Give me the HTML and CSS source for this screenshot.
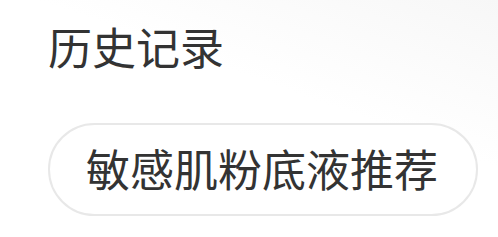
FILE: index.html
```html
<!DOCTYPE html>
<html lang="zh-CN">

<head>
    <meta charset="UTF-8">
    <meta name="viewport" content="width=device-width, initial-scale=1.0">
    <title>历史记录</title>
    <link rel="stylesheet" href="styles.css">
</head>

<body>
    <section class="history">
        <h2 class="history-title">历史记录</h2>
        <div class="history-tags">
            <span class="tag">敏感肌粉底液推荐</span>
        </div>
    </section>
</body>

</html>
```

FILE: styles.css
```css
* {
    margin: 0;
    padding: 0;
    box-sizing: border-box;
}

body {
    font-family: "Noto Sans CJK SC", "Noto Sans", sans-serif;
    background: linear-gradient(200deg, #f7f7f7 0%, #ffffff 40%);
    min-height: 237px;
    color: #333;
}

.history {
    padding: 22px 0 0 48px;
}

.history-title {
    font-size: 44px;
    font-weight: normal;
    line-height: 48px;
}

.history-tags {
    display: flex;
    margin-top: 53px;
}

.tag {
    display: inline-flex;
    align-items: center;
    height: 93px;
    padding: 0 38px 0 36px;
    border: 2px solid #e8e8e8;
    border-radius: 47px;
    background-color: #fff;
    font-size: 44px;
    line-height: 1;
    padding-bottom: 3px;
    color: #333;
}
```
